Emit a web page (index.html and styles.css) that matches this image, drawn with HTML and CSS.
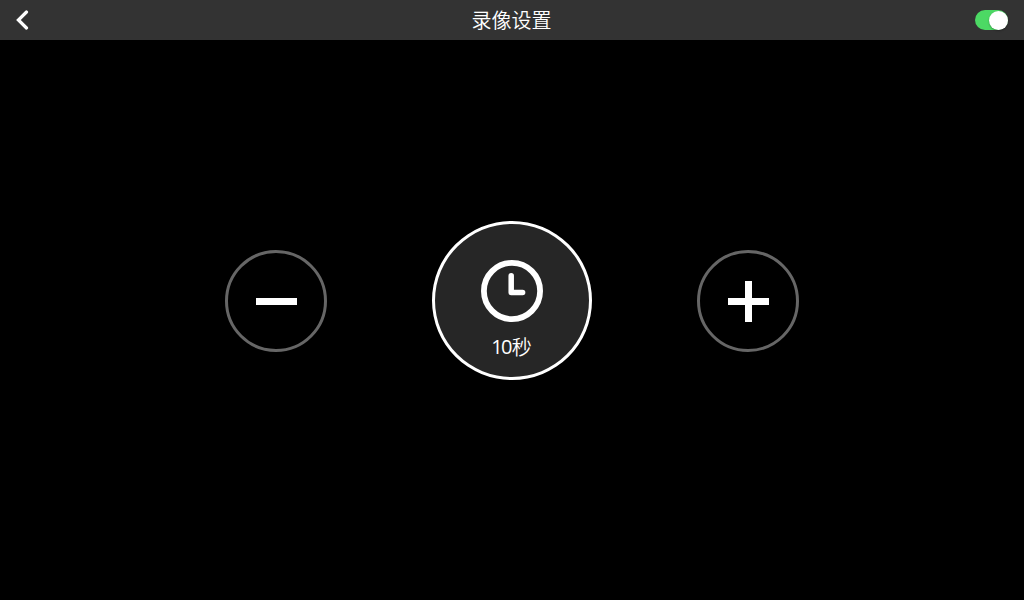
FILE: index.html
```html
<!DOCTYPE html>
<html lang="zh-CN">
<head>
<meta charset="utf-8">
<title>录像设置</title>
<link rel="stylesheet" href="styles.css">
</head>
<body>
<header class="topbar">
  <button class="back" aria-label="返回">
    <svg width="14" height="20" viewBox="0 0 14 20"><path d="M11.5 2 3.4 10l8.1 8" fill="none" stroke="#fff" stroke-width="3.2" stroke-linecap="round"/></svg>
  </button>
  <h1 class="title">录像设置</h1>
  <button class="switch" role="switch" aria-checked="true" aria-label="录像"><span class="knob"></span></button>
</header>
<main class="stage">
  <button class="step" aria-label="减少">
    <svg width="102" height="102" viewBox="0 0 102 102"><circle cx="51" cy="51" r="49.5" fill="none" stroke="#666" stroke-width="3"/><path d="M31 48h41v7H31z" fill="#fff"/></svg>
  </button>
  <div class="dial">
    <svg class="clock" width="62" height="62" viewBox="0 0 62 62" fill="none" stroke="#fff"><circle cx="31" cy="31" r="28.1" stroke-width="5.8"/><path d="M30.2 15.7v16.7h11.4" stroke-width="5.5" stroke-linecap="round" stroke-linejoin="round"/></svg>
    <div class="value"><span class="digits">10</span><span>秒</span></div>
  </div>
  <button class="step" aria-label="增加">
    <svg width="102" height="102" viewBox="0 0 102 102"><circle cx="51" cy="51" r="49.5" fill="none" stroke="#666" stroke-width="3"/><path d="M31 48h41v7H31zM48 31h7v41h-7z" fill="#fff"/></svg>
  </button>
</main>
</body>
</html>
```
FILE: styles.css
```css
* { box-sizing: border-box; }
body {
  margin: 0;
  height: 100vh;
  display: flex;
  flex-direction: column;
  overflow: hidden;
  background: #000;
  color: #fff;
  font-family: "Noto Sans CJK SC", sans-serif;
}
button {
  border: 0;
  padding: 0;
  background: none;
}
svg { display: block; }
.topbar {
  height: 40px;
  flex: none;
  display: grid;
  grid-template-columns: 1fr auto 1fr;
  align-items: center;
  padding: 0 16px 0 15px;
  background: #333;
}
.back { justify-self: start; }
.title {
  margin: 0;
  font-size: 20px;
  line-height: 40px;
  font-weight: 350;
}
.switch {
  justify-self: end;
  display: flex;
  justify-content: flex-end;
  align-items: center;
  width: 33px;
  height: 20px;
  border-radius: 10px;
  background: #4cd964;
}
.knob {
  width: 19px;
  height: 19px;
  border-radius: 50%;
  background: #fff;
  box-shadow: 0 1px 2px rgba(0, 0, 0, .3);
}
.stage {
  display: flex;
  justify-content: center;
  align-items: center;
  gap: 105px;
  height: 522px;
}
.dial {
  display: flex;
  flex-direction: column;
  align-items: center;
  width: 160px;
  height: 159px;
  margin-bottom: 1px;
  padding-top: 36px;
  border: 3px solid #fff;
  border-radius: 50%;
  background: #262626;
}
.value {
  display: flex;
  margin-top: 10px;
  font-size: 20px;
  line-height: 30px;
  font-weight: 350;
}
.digits {
  margin: 0 1px 0 -1px;
  font-family: "Open Sans", sans-serif;
  font-weight: 400;
  letter-spacing: -1.7px;
}
```
